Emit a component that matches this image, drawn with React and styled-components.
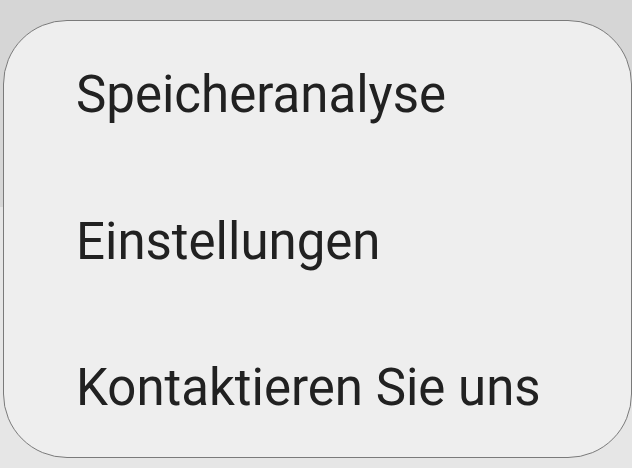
import React from "react";
import styled, { createGlobalStyle } from "styled-components";

const GlobalStyle = createGlobalStyle`
  html, body {
    margin: 0;
    padding: 0;
  }
  body {
    font-family: Roboto, "Noto Sans", sans-serif;
  }
`;

const Page = styled.div`
  width: 632px;
  height: 468px;
  padding: 20px 0 0 3px;
  box-sizing: border-box;
  background: linear-gradient(
    to bottom,
    #d6d6d6 0,
    #d6d6d6 207px,
    #e6e6e6 207px,
    #e6e6e6 100%
  );
  overflow: hidden;
`;

const Menu = styled.ul`
  list-style: none;
  margin: 0;
  padding: 1px 0 0 0;
  width: 629px;
  height: 438px;
  box-sizing: border-box;
  background: #eeeeee;
  border: 1px solid #7a7a7a;
  border-radius: 64px;
  display: flex;
  flex-direction: column;
  overflow: hidden;
`;

const MenuItem = styled.li`
  flex: none;
  height: 146.5px;
  line-height: 146.5px;
  padding-left: 72px;
  font-size: 51px;
  color: #212121;
  white-space: nowrap;
  cursor: pointer;
`;

const items = ["Speicheranalyse", "Einstellungen", "Kontaktieren Sie uns"];

const App = () => {
  return (
    <>
      <GlobalStyle />
      <Page>
        <Menu>
          {items.map((label) => (
            <MenuItem key={label}>{label}</MenuItem>
          ))}
        </Menu>
      </Page>
    </>
  );
};

export default App;
